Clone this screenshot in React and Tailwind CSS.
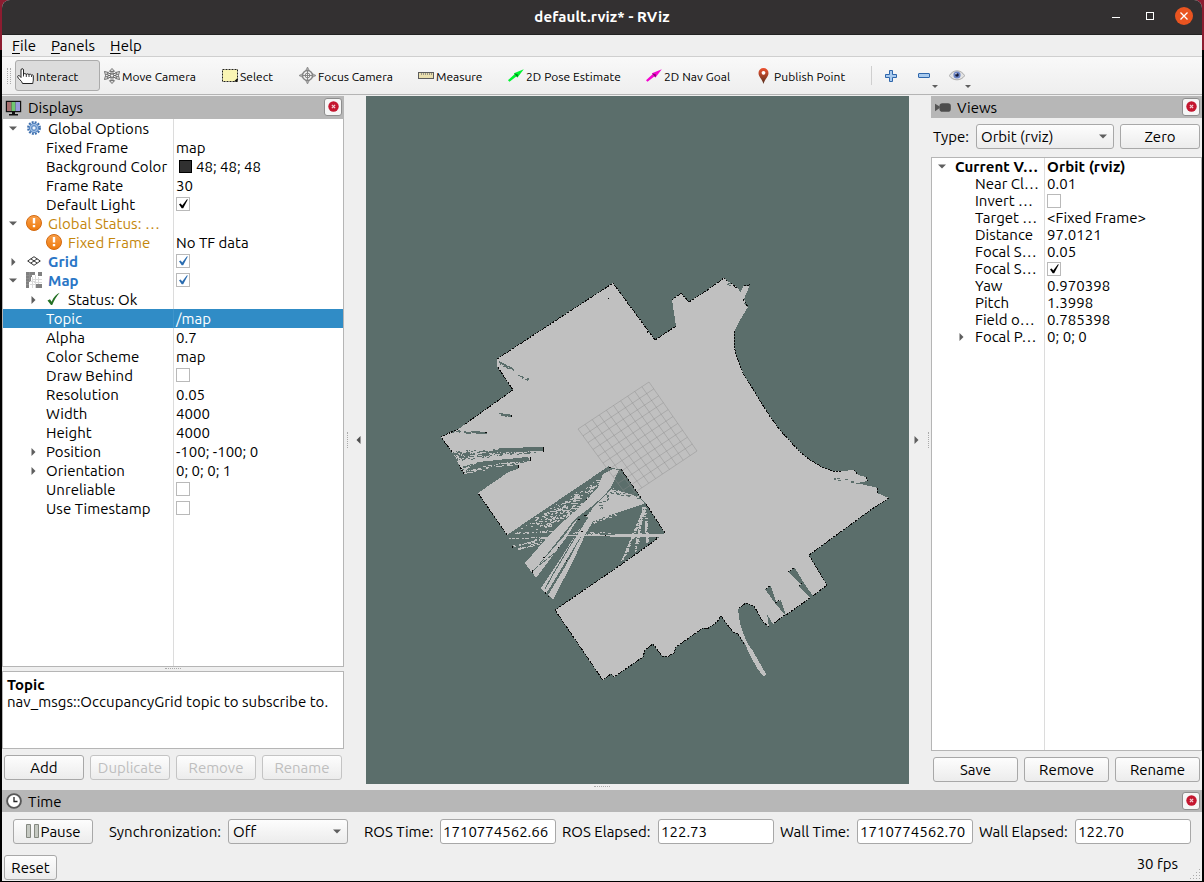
import React from 'react';

const f = (x) => Math.round(x * 10) / 10;

/* ---------- map drawing helpers ---------- */
function speckle(x1, y1, x2, y2, spread, density, seed) {
  let s = seed * 7919;
  const rnd = () => {
    s = (s * 16807) % 2147483647;
    return s / 2147483647;
  };
  const len = Math.hypot(x2 - x1, y2 - y1);
  const n = Math.round(len * density);
  let d = '';
  for (let i = 0; i < n; i++) {
    const t = rnd();
    const off = (rnd() - 0.5) * spread;
    const w = 1 + Math.floor(rnd() * 2.4);
    d += `M${Math.round(x1 + (x2 - x1) * t)} ${Math.round(y1 + (y2 - y1) * t + off)}h${w}v1h-${w}z`;
  }
  return d;
}

const OUTLINE =
  '613,283 655,340 676,326 672,300 681,293 689,302 706,291 724,278 727,281 731,283 735,286 739,289 740,293 744,285 747,286 750,284 747,292 744,299 748,307 745,312 740,320 736,328 734,334 734,346 737,358 744,375 753,389 762,404 771,418 780,430 790,441 800,452 810,460 822,467 833,471 841,471 854,470 858,475 866,477 868,481 857,483 878,488 877,493 889,498 872,509 809,555 827,585 813,596 804,583 795,568 788,572 801,584 799,587 810,598 786,615 781,600 776,602 771,586 765,589 775,603 785,615 773,624 767,614 769,627 763,622 754,606 750,605 746,603 738,609 740,623 743,633 748,644 753,651 758,660 766,674 764,677 757,668 750,655 745,644 738,634 733,632 721,616 717,622 707,629 703,628 676,647 674,653 667,657 662,656 653,644 645,650 643,657 614,677 611,674 608,676 603,680 600,676 555,610 622,564 665,533 646,504 641,498 621,469 609,468 507,535 478,493 510,471 518,469 518,465 464,474 459,465 454,455 441,437 460,428 485,410 513,390 497,366 497,359';

const EDGES = [
  '497,359 613,283 655,340 676,326', '672,300 681,293 689,302 706,291 724,278 727,281',
  '731,283 738,289', '744,285 747,286 750,284', '743,299 748,307',
  '734,331 734,346 737,358 744,375 753,389 762,404 771,418 780,430 790,441 800,452 810,460 822,467 833,471 841,471',
  '854,470 858,475', '866,477 868,481', '877,488 877,493', '889,498 872,509 809,555 827,585 813,596',
  '794,568 788,572', '799,586 802,583', '810,598 786,615', '770,586 765,589', '775,603 780,600',
  '785,615 773,624', '769,627 763,622 754,606 746,603 738,609',
  '744,644 738,634 733,632 721,616 717,622 707,629 703,628 676,647 674,653 667,657 662,656 653,644 645,650 643,657 614,677 611,674 603,680 600,676 555,610 622,564 657,539',
  '665,533 646,504', '641,498 621,469', '507,535 478,493', '464,474 459,465', '452,452 441,437 460,428', '465,424 513,390 497,366',
];

function Grid() {
  const L = [578, 429], T = [649, 382], R = [697, 451], B = [628, 497];
  let d = '';
  for (let i = 0; i <= 10; i++) {
    const t = i / 10;
    const m = (a, b) => `${f(a[0] + (b[0] - a[0]) * t)} ${f(a[1] + (b[1] - a[1]) * t)}`;
    d += `M${m(L, T)}L${m(B, R)}M${m(L, B)}L${m(T, R)}`;
  }
  return <path d={d} fill="none" stroke="#8b8b8b" strokeOpacity="0.42" strokeWidth="1" />;
}

const FREE_NOISE =
  speckle(520, 530, 596, 486, 5, 0.5, 11) + speckle(534, 522, 603, 480, 9, 1.1, 31) +
  speckle(545, 524, 592, 492, 14, 1.9, 77) + speckle(535, 527, 570, 512, 7, 1.1, 91) +
  speckle(513, 533, 552, 531, 1, 0.8, 5) + speckle(508, 538, 548, 537, 1, 0.7, 7) +
  speckle(513, 546, 548, 537, 2, 1.1, 9) + speckle(517, 549, 546, 540, 2, 0.9, 29) +
  speckle(644, 508, 621, 561, 3, 2, 23) + speckle(643, 507, 635, 548, 7, 2, 44) +
  speckle(644, 507, 646, 543, 5, 1.8, 55) + speckle(612, 490, 638, 498, 4, 2, 66) +
  speckle(590, 521, 616, 511, 7, 2, 67) + speckle(567, 534, 610, 533, 3, 1, 68);

const UNKNOWN_NOISE =
  speckle(498, 362, 513, 370, 3, 1.5, 8) + speckle(517, 374, 527, 379, 2, 0.8, 18) +
  speckle(497, 413, 511, 416, 2, 1.5, 28) + speckle(452, 431, 485, 433, 2, 1.1, 38) +
  speckle(453, 454, 535, 450, 6, 2.2, 48) + speckle(454, 458, 505, 451, 7, 1.8, 58) +
  speckle(462, 468, 525, 459, 6, 2.4, 68) + speckle(464, 472, 515, 466, 2, 1.6, 78) +
  speckle(727, 281, 735, 285, 7, 1.2, 88) + speckle(744, 303, 748, 308, 6, 1, 98) +
  speckle(834, 478, 858, 482, 3, 0.5, 108) + speckle(606, 496, 612, 494, 8, 1.4, 4) +
  speckle(586, 512, 606, 503, 8, 0.4, 14);

function MapView() {
  return (
    <svg className="block h-[688px] w-[543px] bg-[#5b6e6b]" viewBox="366 96 543 688">
      <g shapeRendering="crispEdges">
        <polygon points={OUTLINE} fill="#c0c0c0" />
        <g fill="#5b6e6b">
          <polygon points="609,466 611,469 560,504 512,535 507,535" />
          <polygon points="641,498 621,469 610,489 618,492 630,496" />
          <polygon points="497,360 505,364 513,369 505,366" />
          <polygon points="504,448 543,447 543,451 503,452 480,454" />
          <polygon points="478,462 528,457 530,461 500,463 466,470" />
          <polygon points="486,468 518,465 518,469 505,473" />
          <polygon points="504,414 511,415 511,417 504,416" />
          <polygon points="473,431 486,432 486,434 473,433" />
        </g>
        <g fill="#c0c0c0">
          <polygon points="619,470 613,469 603,474 598,487 583,504 556,528 545,540 525,563 532,573 552,548 568,528 575,519 591,507 604,496 611,487" />
          <polygon points="611,489 618,495 640,499 644,502 644,504 604,517 592,521 586,517 595,505" />
          <polygon points="564,536 575,521 579,517 566,538 536,578 532,572 544,559" />
          <polygon points="590,515 595,517 578,541 546,594 541,588 561,558 578,531" />
          <polygon points="588,522 594,520 586,533 574,559 553,600 548,595 565,567 582,535" />
          <polygon points="565,535 665,534 665,536 655,537 565,536" />
        </g>
        <polyline points="588,517 571,544 552,576 545,589" fill="none" stroke="#5b6e6b" />
        <polyline points="576,527 560,549 538,566 533,571" fill="none" stroke="#5b6e6b" strokeDasharray="9 2" />
        <path d={FREE_NOISE} fill="#c0c0c0" />
        <path d={UNKNOWN_NOISE} fill="#5b6e6b" />
        <g fill="none" stroke="#080808" strokeWidth="1" strokeDasharray="2 1">
          {EDGES.map((p) => <polyline key={p} points={p} />)}
        </g>
        <path
          d="M608 298h1v1h-1zM543 447h1v5h-1zM530 457h1v4h-1zM518 465h1v3h-1zM511 415h1v2h-1zM485 432h2v1h-2zM609 467h2v1h-2zM586 499h1v1h-1zM581 531h2v1h-2zM605 535h1v1h-1zM543 557h2v1h-2zM558 547h1v1h-1zM566 560h1v1h-1zM532 570h1v3h-1zM545 592h1v2h-1zM548 596h1v1h-1zM578 520h2v-1h-2zM584 515h3v1h-3zM647 331h1v2h-1zM512 546h1v2h-1zM656 537h1v2h-1z"
          fill="#080808"
        />
      </g>
      <Grid />
    </svg>
  );
}

/* ---------- small icons ---------- */
const Down = ({ c = '' }) => (
  <svg className={`h-[5px] w-[8px] shrink-0 ${c}`} viewBox="0 0 8 5"><path d="M0 .5h8L4 4.500z" fill="#5e5e5e" /></svg>
);
const Right = () => (
  <svg className="h-2 w-[5px] shrink-0" viewBox="0 0 5 8"><path d="M.5 0v8L4.500 4z" fill="#5e5e5e" /></svg>
);
const Left = () => (
  <svg className="h-2 w-[5px] shrink-0" viewBox="0 0 5 8"><path d="M4.500 0v8L.5 4z" fill="#4e4e4e" /></svg>
);
const Gear = () => (
  <svg className="size-[14px]" viewBox="0 0 14 14">
    <circle cx="7" cy="7" r="5.800" fill="none" stroke="#3d6fae" strokeWidth="2.200" strokeDasharray="1.900 1.137" />
    <circle cx="7" cy="7" r="4.600" fill="#9dbde3" stroke="#4a7cbb" strokeWidth=".9" />
    <circle cx="7" cy="7" r="2.400" fill="#b9d0ec" stroke="#4a7cbb" strokeWidth=".9" />
    <circle cx="7" cy="7" r="1" fill="#fff" />
  </svg>
);
const Warn = () => (
  <svg className="size-4" viewBox="0 0 16 16">
    <defs><linearGradient id="wg" x1="0" y1="0" x2="0" y2="1"><stop offset="0" stopColor="#f9a04b" /><stop offset="1" stopColor="#ee7a0c" /></linearGradient></defs>
    <circle cx="8" cy="8" r="7.500" fill="url(#wg)" stroke="#d36a10" />
    <path d="M6.800 3h2.400v5.500H6.800zM6.800 10h2.400v2.200H6.800z" fill="#fff" />
  </svg>
);
const GridIcon = () => (
  <svg className="h-[10px] w-[14px]" viewBox="0 0 14 10">
    <path d="M7 .7 13.300 5 7 9.300.7 5zM3.800 2.800l6.400 4.300M10.200 2.800 3.800 7.100" fill="none" stroke="#333" strokeWidth="1" />
  </svg>
);
const MapIcon = () => (
  <svg className="size-4" viewBox="0 0 16 16" shapeRendering="crispEdges">
    <path d="M0 0h9v3H6v2H5v4H3v7H0zM12 0h4v4h-4zM9 12h7v4H9z" fill="#808080" />
    <path d="M4 9h5v7M6 5v11M9 3v9M12 5v7M4 12h5M6 7h10M8 10h8" fill="none" stroke="#dadada" />
    <path d="M3 0v9M0 3h6M0 6h4M0 9h4M0 12h3" fill="none" stroke="#8e8e8e" />
  </svg>
);
const Tick = () => (
  <svg className="h-[14px] w-[13px]" viewBox="0 0 13 14">
    <path d="M.5 8.500 3 7.300l1.600 2.500C6.500 5 9.500 2 12.700.8 9.500 4.500 7 8.500 5.200 13H4z" fill="#247024" />
  </svg>
);
const Monitor = () => (
  <svg className="h-4 w-[17px]" viewBox="0 0 17 16">
    <rect x=".8" y=".8" width="15.400" height="11.400" fill="#111" />
    <path d="M2 2h4.500v9H2z" fill="#a87070" /><path d="M6.500 2h4v9h-4z" fill="#70c770" /><path d="M10.500 2H15v9h-4.500z" fill="#9a9adb" />
    <path d="M7 12h3v2h3v1.500H4V14h3z" fill="#111" />
  </svg>
);
const CamIcon = () => (
  <svg className="ml-px h-[9px] w-[17px]" viewBox="0 0 17 9"><path d="M0 .5 5 3.500V5L0 8.500z" fill="#555" /><rect x="4.800" y="0" width="12" height="9" rx="3" fill="#4c4c4c" /></svg>
);
const Clock = () => (
  <svg className="size-4" viewBox="0 0 16 16"><circle cx="8" cy="8" r="6.900" fill="#fff" stroke="#575757" strokeWidth="1.900" /><path d="M8 4v4.500h3.500" fill="none" stroke="#222" strokeWidth="1.300" /></svg>
);
const Hand = () => (
  <svg className="-ml-px h-4 w-[17px]" viewBox="0 0 17 16">
    <path d="M4 9.500V2C4 .2 6.500.2 6.500 2v4.500c0-1.300 2.800-1.300 2.800.2 0-1.200 2.700-1.200 2.700.3 0-1.200 2.500-1 2.500.3 0-.8 1.800-.8 1.800.7v4.200c0 1.300-.5 1.500-.5 3.300H5.500C5.200 13 .8 10.500.6 8.800.5 7 2.800 7.200 4 9.500z" fill="#fff" stroke="#222" strokeWidth="1" />
    <path d="M6.500 6v2.500M9.300 6.500V9M12 7v2M14.500 7.500V9" stroke="#222" fill="none" strokeWidth=".9" />
  </svg>
);
const MoveIcon = () => (
  <svg className="size-4" viewBox="0 0 16 16">
    <g fill="#f2f2f2" stroke="#4c4c4c" strokeWidth=".8">
      <path d="M3 5.500 13 9.500M13 5.500 3 9.500M8 3v10" strokeWidth="2.600" />
      <path d="M3 5.500 13 9.500M13 5.500 3 9.500M8 3v10" stroke="#f2f2f2" strokeWidth="1.200" />
      <path d="M8 .5 10.500 3.300h-5zM8 15.500l2.500-2.800h-5zM.5 3.500l3.800 1-2.800 2.700zM15.500 3.500l-3.800 1 2.800 2.700zM.5 11.500l3.800-1-2.800-2.700zM15.500 11.500l-3.800-1 2.800-2.700z" />
      <circle cx="8" cy="7.600" r="1.700" />
    </g>
  </svg>
);
const SelectIcon = () => (
  <svg className="h-[13px] w-4" viewBox="0 0 16 13"><rect x=".5" y=".5" width="15" height="12" fill="#faf5b4" stroke="#222" strokeDasharray="2 1" /><path d="M12 12.500h3.500V9z" fill="#111" /></svg>
);
const FocusIcon = () => (
  <svg className="size-[17px]" viewBox="0 0 17 17">
    <g fill="none" stroke="#858585"><circle cx="8.500" cy="8.500" r="5" strokeWidth="1.400" /><circle cx="8.500" cy="8.500" r="2.400" /><path d="M8.500 3v11M3 8.500h11" /></g>
    <path d="M8.500 0 10.300 3.500H6.700zM8.500 17l1.800-3.500H6.700zM0 8.500l3.500-1.800v3.600zM17 8.500l-3.500-1.800v3.600z" fill="#aaa" stroke="#777" strokeWidth=".6" />
  </svg>
);
const Ruler = () => (
  <svg className="h-[7px] w-4" viewBox="0 0 16 7"><rect x=".5" y=".5" width="15" height="6" fill="#eadfae" stroke="#5c5c5c" /><path d="M3.500 1v2M5.500 1v2M7.500 1v2M9.500 1v2M11.500 1v2M13.500 1v2" stroke="#777" strokeWidth=".7" /></svg>
);
const Arrow = ({ c }) => (
  <svg className="h-[13px] w-4" viewBox="0 0 16 13"><path d="m0 11.200 6.500-6L6 4.300 15.800.2 9.500 8.500 8.300 7.500 1.500 12.800z" fill={c} /><path d="m6 4.300 3.500 4.200.5-3z" fill="#000" opacity=".45" /></svg>
);
const Pin = () => (
  <svg className="h-4 w-[11px]" viewBox="0 0 11 16">
    <defs><linearGradient id="pg" x1="0" y1="0" x2="0" y2="1"><stop offset="0" stopColor="#ef5230" /><stop offset="1" stopColor="#54301f" /></linearGradient></defs>
    <path d="M5.500 16C4.500 11.500.5 9 .5 5a5 5 0 0 1 10 0c0 4-4 6.500-5 11z" fill="url(#pg)" /><circle cx="5.500" cy="4.800" r="1.900" fill="#fff" />
  </svg>
);
const Plus = () => (
  <svg className="size-3" viewBox="0 0 12 12"><path d="M4.500.5h3v4h4v3h-4v4h-3v-4h-4v-3h4z" fill="#a8caee" stroke="#2f66ab" /></svg>
);
const Minus = () => (
  <svg className="h-[5px] w-3" viewBox="0 0 12 5"><rect x=".5" y=".5" width="11" height="4" rx=".5" fill="#a8caee" stroke="#2f66ab" /></svg>
);
const Eye = () => (
  <svg className="h-[11px] w-4" viewBox="0 0 16 11"><path d="M.3 5.700C4-.8 12-.8 15.700 5.700 12 11.200 4 11.200.3 5.700z" fill="#e4e4e4" stroke="#999" strokeWidth=".8" /><circle cx="8" cy="5" r="3.600" fill="#6a83c5" /><circle cx="8" cy="5" r="1.800" fill="#141a38" /><circle cx="7" cy="3.700" r=".7" fill="#fff" /></svg>
);

/* ---------- widgets ---------- */
const CloseBtn = () => (
  <span className="flex size-[18px] items-center justify-center rounded-[3px] border border-[#8e8e8e] bg-[#f6f6f6] pb-px">
    <svg className="size-[11px]" viewBox="0 0 11 11"><circle cx="5.500" cy="5.500" r="5.200" fill="#c4162f" /><path d="m3.900 3.900 3.200 3.200M7.100 3.900 3.900 7.100" stroke="#f3ccd2" strokeWidth="1.300" /></svg>
  </span>
);

const Header = ({ icon, title, h, tp = 'pt-px' }) => (
  <div className={`flex shrink-0 justify-between bg-[#b7b7b7] pr-[2px] pl-[3px] ${h}`}>
    <div className="flex items-center gap-[6px]"><span className="flex w-[17px] justify-center">{icon}</span><span className={tp}>{title}</span></div>
    <div className="pt-[2px]"><CloseBtn /></div>
  </div>
);

const Btn = ({ children, c = 'w-20', off }) => (
  <button className={`flex h-[25px] shrink-0 items-center justify-center rounded-[3px] border bg-linear-to-b from-[#fdfdfd] to-[#ececec] pb-px ${off ? 'border-[#c4c4c4] text-[#bebebe]' : 'border-[#a8a8a8]'} ${c}`}>
    {children}
  </button>
);

const Check = ({ v }) => (
  <span className="flex size-[14px] items-center justify-center border border-[#b9b9b9] bg-white">
    {v !== 'off' && (
      <svg className="h-[10px] w-[9px]" viewBox="0 0 9 10"><path d="M0 5.200 1.700 4.500l1.500 2L8 .3l.8.2L4.200 9.200H2.700z" fill={v === 'blue' ? '#2a6cb0' : '#000'} /></svg>
    )}
  </span>
);

const Combo = ({ children, c }) => (
  <div className={`flex h-[25px] items-center justify-between rounded-[3px] border border-[#a8a8a8] bg-linear-to-b from-[#fdfdfd] to-[#ececec] pr-[6px] pl-1 ${c}`}>
    <span className="pb-px">{children}</span><Down />
  </div>
);

const Field = ({ label, value, lw, c = '' }) => (
  <div className={`flex items-center ${c}`}>
    <span className={`whitespace-nowrap ${lw}`}>{label}</span>
    <span className="flex h-[25px] w-[116px] items-center rounded-[3px] border border-[#a8a8a8] bg-white pb-px pl-[2px]">{value}</span>
  </div>
);

const DISPLAYS = [
  { a: 'd', icon: <Gear />, t: 'Global Options' },
  { t: 'Fixed Frame', v: 'map' },
  { t: 'Background Color', v: '48; 48; 48', swatch: true },
  { t: 'Frame Rate', v: '30' },
  { t: 'Default Light', v: <Check v="black" /> },
  { a: 'd', icon: <Warn />, t: 'Global Status: …', c: 'text-[#c4860a]' },
  { icon: <Warn />, deep: true, t: 'Fixed Frame', c: 'text-[#c4860a]', v: 'No TF data' },
  { a: 'r', icon: <GridIcon />, t: 'Grid', c: 'font-bold text-[#2a76c6]', v: <Check v="blue" /> },
  { a: 'd', icon: <MapIcon />, t: 'Map', c: 'font-bold text-[#2a76c6]', v: <Check v="blue" /> },
  { a: 'r', icon: <Tick />, deep: true, t: 'Status: Ok' },
  { t: 'Topic', v: '/map', sel: true },
  { t: 'Alpha', v: '0.7' },
  { t: 'Color Scheme', v: 'map' },
  { t: 'Draw Behind', v: <Check v="off" /> },
  { t: 'Resolution', v: '0.05' },
  { t: 'Width', v: '4000' },
  { t: 'Height', v: '4000' },
  { a: 'r', t: 'Position', v: '-100; -100; 0' },
  { a: 'r', t: 'Orientation', v: '0; 0; 0; 1' },
  { t: 'Unreliable', v: <Check v="off" /> },
  { t: 'Use Timestamp', v: <Check v="off" /> },
];

const VIEWS = [
  ['Near Cl…', '0.01'], ['Invert …', <Check v="off" />], ['Target …', '<Fixed Frame>'], ['Distance', '97.0121'],
  ['Focal S…', '0.05'], ['Focal S…', <Check v="black" />], ['Yaw', '0.970398'], ['Pitch', '1.3998'],
  ['Field o…', '0.785398'], ['Focal P…', '0; 0; 0', true],
];

function DisplayRow({ a, icon, t, c = '', v, deep, sel, swatch }) {
  const child = deep || !icon;
  return (
    <div className={`flex h-[19px] whitespace-nowrap ${sel ? 'bg-[#308cc6] text-white' : ''}`}>
      <div className={`flex w-[171px] items-center border-r ${child ? 'pl-5' : ''} ${sel ? 'border-[#3f95cb]' : 'border-[#dcdcdc]'}`}>
        <span className="flex w-5 shrink-0 justify-center">{a === 'd' ? <Down /> : a === 'r' ? <Right /> : null}</span>
        {icon && <span className="mr-[6px] ml-[2px] flex w-[17px] shrink-0 justify-center pb-px">{icon}</span>}
        <span className={`pb-px tracking-[0.06px] ${icon ? '' : 'pl-[3px]'} ${c}`}>{t}</span>
      </div>
      <div className="flex items-center pl-[2px]">
        {swatch && <span className="mr-[4px] ml-[3px] size-[13px] border border-black bg-[#303030]" />}
        <span className="pb-px">{v}</span>
      </div>
    </div>
  );
}

const Tool = ({ icon, children, c }) => (
  <div className={`flex h-[31px] shrink-0 items-center whitespace-nowrap ${c}`}>{icon}<span className="pt-px pl-[2px]">{children}</span></div>
);

const Dots = ({ c }) => <div className={`border-[#aaa] border-dotted ${c}`} />;

export default function App() {
  return (
    <div className="h-[882px] w-[1204px] overflow-hidden bg-linear-to-b from-[#8c1c30] from-[50px] to-black to-[50px] px-[2px] pb-px font-['Ubuntu','Noto_Sans',sans-serif] text-[15px] leading-[17px] text-black">
      <div className="flex h-[881px] w-[1200px] flex-col overflow-hidden rounded-t-lg bg-[#efefef]">
        {/* title bar */}
        <div className="grid h-[35px] shrink-0 grid-cols-[1fr_auto_1fr] items-center border-b border-[#222] bg-[#333031] text-white">
          <span />
          <span className="pb-[2px] font-bold tracking-[0.1px]">default.rviz* - RViz</span>
          <div className="flex items-center justify-end pr-[9px] pb-[3px]">
            <span className="mt-1 mr-[26px] h-px w-2 bg-white" />
            <span className="mr-[21px] size-2 border border-white" />
            <span className="flex size-[18px] items-center justify-center rounded-full bg-[#e95420]">
              <svg className="size-2" viewBox="0 0 8 8"><path d="m.5.5 7 7M7.500.5l-7 7" stroke="#fff" strokeWidth="1.300" /></svg>
            </span>
          </div>
        </div>
        {/* menu bar */}
        <div className="flex h-[22px] shrink-0 items-center gap-[15px] border-b border-[#cfcfcf] pb-px pl-[10px] tracking-[0.05px]">
          {['File', 'Panels', 'Help'].map((m) => (
            <span key={m}><span className="underline underline-offset-2">{m[0]}</span>{m.slice(1)}</span>
          ))}
        </div>
        {/* tool bar */}
        <div className="flex h-[38px] shrink-0 items-center border-b border-[#b4b4b4] bg-linear-to-b from-[#f9f9f9] to-[#eeeeee] text-[12px]">
          <Dots c="ml-[5px] h-4 w-[4px] border-x" />
          <Tool icon={<Hand />} c="ml-[4px] w-[85px] rounded-[3px] border border-[#ababab] bg-[#dcdcdc] pl-[2px]">Interact</Tool>
          <Tool icon={<MoveIcon />} c="ml-[4px] w-[118px]">Move Camera</Tool>
          <Tool icon={<SelectIcon />} c="w-[77px]">Select</Tool>
          <Tool icon={<FocusIcon />} c="w-[119px]">Focus Camera</Tool>
          <Tool icon={<Ruler />} c="w-[90px]">Measure</Tool>
          <Tool icon={<Arrow c="#00f431" />} c="w-[138px] tracking-[0.05px]">2D Pose Estimate</Tool>
          <Tool icon={<Arrow c="#f406cf" />} c="w-[112px] tracking-[0.05px]">2D Nav Goal</Tool>
          <Tool icon={<Pin />} c="w-[113px] gap-[3px] tracking-[0.06px]">Publish Point</Tool>
          <span className="h-[19px] w-px bg-[#cfcfcf]" />
          <span className="ml-[13px]"><Plus /></span>
          <span className="ml-[21px]"><Minus /></span>
          <Down c="mt-[21px] ml-[1px] scale-75" />
          <span className="ml-[10px]"><Eye /></span>
          <Down c="mt-[21px] -ml-[1px] scale-75" />
        </div>
        <div className="h-px shrink-0" />
        {/* docks and 3D view */}
        <div className="flex h-[688px] shrink-0">
          <div className="flex w-[342px] flex-col">
            <Header icon={<Monitor />} title="Displays" h="h-[23px]" tp="pb-px" />
            <div className="flex h-[548px] flex-col border-r border-b border-l border-[#b5b5b5] bg-white">
              {DISPLAYS.map((r, i) => <DisplayRow key={i} {...r} />)}
              <div className="w-[171px] grow border-r border-[#dcdcdc]" />
            </div>
            <div className="flex h-1 items-start justify-center"><Dots c="mt-px w-4 border-t" /></div>
            <div className="h-[78px] border border-[#b5b5b5] bg-white px-1 pt-1">
              <div className="font-bold">Topic</div>
              <div className="whitespace-nowrap tracking-[0.05px]">nav_msgs::OccupancyGrid topic to subscribe to.</div>
            </div>
            <div className="flex gap-[6px] pt-[6px] pl-[2px]">
              <Btn>Add</Btn><Btn off>Duplicate</Btn><Btn off>Remove</Btn><Btn off>Rename</Btn>
            </div>
          </div>
          <div className="flex w-[22px] items-center justify-center gap-[8px] pr-[3px]"><Dots c="h-4 border-l" /><Left /></div>
          <MapView />
          <div className="flex w-[22px] items-center gap-[9px] pl-[5px]"><Right /><Dots c="h-4 border-l" /></div>
          <div className="flex w-[271px] flex-col">
            <Header icon={<CamIcon />} title="Views" h="h-[22px]" />
            <div className="flex items-center pt-[6px] pl-[2px]">
              <span className="w-[43px]">Type:</span>
              <Combo c="w-[138px]">Orbit (rviz)</Combo>
              <Btn c="ml-[6px] w-20">Zero</Btn>
            </div>
            <div className="mt-2 flex h-[594px] flex-col border border-[#b5b5b5] bg-white">
              <div className="flex h-[17px] items-center font-bold whitespace-nowrap">
                <div className="flex h-full w-[113px] items-center border-r border-[#dcdcdc] pl-[6px]"><Down /><span className="pl-[9px] tracking-[0.08px]">Current V…</span></div>
                <span className="pl-[2px] tracking-[0.1px]">Orbit (rviz)</span>
              </div>
              {VIEWS.map(([k, v, arrow], i) => (
                <div key={i} className="flex h-[17px] items-center whitespace-nowrap">
                  <div className="flex h-full w-[113px] items-center border-r border-[#dcdcdc] pl-[27px]"><span className="w-4 shrink-0">{arrow && <Right />}</span>{k}</div>
                  <span className="pl-[2px] tracking-[0.03px]">{v}</span>
                </div>
              ))}
              <div className="w-[113px] grow border-r border-[#dcdcdc]" />
            </div>
            <div className="flex gap-[6px] pt-[6px] pl-[2px]">
              <Btn c="w-[85px]">Save</Btn><Btn c="w-[85px]">Remove</Btn><Btn c="w-[85px]">Rename</Btn>
            </div>
          </div>
        </div>
        <div className="flex h-[6px] shrink-0 items-start justify-center"><Dots c="mt-[2px] w-4 border-t" /></div>
        {/* time panel */}
        <Header icon={<Clock />} title="Time" h="h-[22px]" />
        <div className="flex shrink-0 items-center pt-[7px] pl-[11px]">
          <Btn c="w-20 gap-[1px]">
            <svg className="h-[14px] w-[14px]" viewBox="0 0 14 14"><path d="M.5.5h4v13h-4zM8.500.5h4v13h-4z" fill="#c5c9c2" stroke="#858981" /></svg>
            Pause
          </Btn>
          <span className="ml-4 w-[119px] tracking-[0.08px]">Synchronization:</span>
          <Combo c="w-[120px]">Off</Combo>
          <Field c="ml-4" lw="w-[76px]" label="ROS Time:" value="1710774562.66" />
          <Field c="ml-[6px]" lw="w-[96px]" label="ROS Elapsed:" value="122.73" />
          <Field c="ml-[6px]" lw="w-[77px]" label="Wall Time:" value="1710774562.70" />
          <Field c="ml-[6px]" lw="w-[96px]" label="Wall Elapsed:" value="122.70" />
        </div>
        <div className="flex grow items-start justify-between pt-[11px] pl-[2px]">
          <Btn c="w-[53px]">Reset</Btn>
          <div className="flex h-full items-start gap-[12px]">
            <span>30 fps</span>
            <svg className="mt-[14px] size-3" viewBox="0 0 12 12"><path d="M9 0h1v1H9zM6 3h1v1H6zM9 3h1v1H9zM3 6h1v1H3zM6 6h1v1H6zM9 6h1v1H9zM0 9h1v1H0zM3 9h1v1H3zM6 9h1v1H6zM9 9h1v1H9z" fill="#aaa" /></svg>
          </div>
        </div>
      </div>
    </div>
  );
}
